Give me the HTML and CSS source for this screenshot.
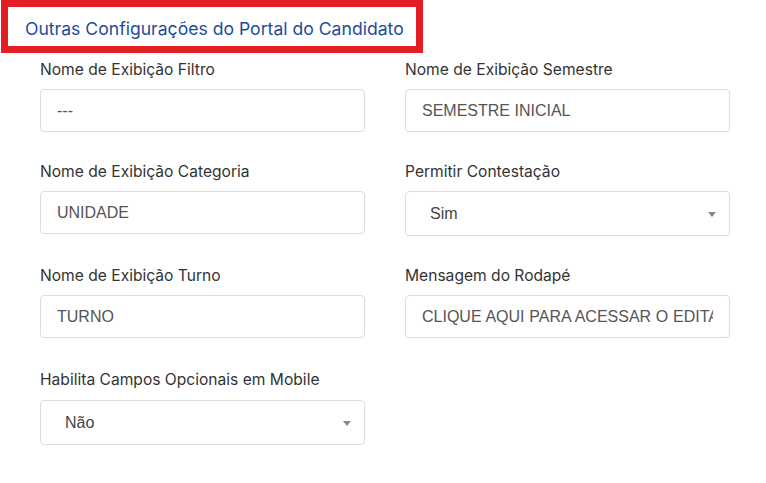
FILE: index.html
```html
<!DOCTYPE html>
<html lang="pt-BR">
<head>
<meta charset="utf-8">
<link rel="stylesheet" href="styles.css">
</head>
<body>
<div class="page">
  <div class="title-box">
    <h2 class="title">Outras Configurações do Portal do Candidato</h2>
  </div>
  <div class="form-grid">
    <div class="field">
      <label class="label">Nome de Exibição Filtro</label>
      <div class="input"><span class="value">---</span></div>
    </div>
    <div class="field">
      <label class="label">Nome de Exibição Semestre</label>
      <div class="input"><span class="value">SEMESTRE INICIAL</span></div>
    </div>
    <div class="field">
      <label class="label">Nome de Exibição Categoria</label>
      <div class="input"><span class="value">UNIDADE</span></div>
    </div>
    <div class="field">
      <label class="label">Permitir Contestação</label>
      <div class="input select"><span class="value">Sim</span><span class="caret"></span></div>
    </div>
    <div class="field">
      <label class="label">Nome de Exibição Turno</label>
      <div class="input"><span class="value">TURNO</span></div>
    </div>
    <div class="field">
      <label class="label">Mensagem do Rodapé</label>
      <div class="input"><span class="value wide">CLIQUE AQUI PARA ACESSAR O EDITAL</span></div>
    </div>
    <div class="field">
      <label class="label">Habilita Campos Opcionais em Mobile</label>
      <div class="input select"><span class="value">Não</span><span class="caret"></span></div>
    </div>
  </div>
</div>
</body>
</html>
```
FILE: styles.css
```css
* { box-sizing: border-box; }
html, body { margin: 0; padding: 0; background: #fff; }
body { font-family: "Inter", "Liberation Sans", sans-serif; }
.page { padding: 0 0 0 1px; }
.title-box {
  width: 422px;
  height: 53px;
  border: 7px solid #e41f23;
  padding: 0 0 0 17px;
  display: flex;
  align-items: center;
}
.title {
  margin: 0;
  font-family: "Inter", sans-serif;
  font-weight: 400;
  font-size: 17.6px;
  color: #1d4c99;
  padding-top: 4px;
  white-space: nowrap;
}
.form-grid {
  display: grid;
  grid-template-columns: 325px 325px;
  column-gap: 40px;
  row-gap: 31px;
  padding: 8px 0 0 39px;
}
.field { display: flex; flex-direction: column; }
.label {
  font-family: "Inter", sans-serif;
  font-size: 15.6px;
  line-height: 18px;
  color: #333;
  margin-bottom: 10px;
}
.field:nth-child(7) .label { margin-bottom: 11px; }
.field:nth-child(7) { margin-top: 2px; }
.input {
  height: 43px;
  border: 1px solid #dcdcdc;
  border-radius: 4px;
  padding: 0 16px;
  display: flex;
  align-items: center;
  font-family: "Liberation Sans", Arial, sans-serif;
  font-size: 16px;
  color: #555;
}
.value {
  flex: 1;
  min-width: 0;
  white-space: nowrap;
  overflow: hidden;
}
.wide { word-spacing: 0.3px; }
.select {
  height: 45px;
  padding: 0 0 0 24px;
  position: relative;
  color: #444;
}
.caret {
  position: absolute;
  right: 13px;
  top: 50%;
  margin-top: -2px;
  width: 0; height: 0;
  border-left: 4px solid transparent;
  border-right: 4px solid transparent;
  border-top: 5px solid #888;
}
```
